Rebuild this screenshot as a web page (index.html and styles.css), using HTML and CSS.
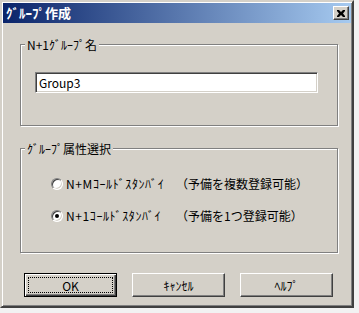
FILE: index.html
```html
<!DOCTYPE html>
<html lang="ja">
<head>
<meta charset="UTF-8" />
<title>ｸﾞﾙｰﾌﾟ作成</title>
<link rel="stylesheet" href="styles.css">
</head>
<body>

<div class="window">
    <div class="titlebar">
        <span class="title">ｸﾞﾙｰﾌﾟ作成</span>
        <button class="close-btn" aria-label="close">
            <svg viewBox="0 0 8 7" width="8" height="7">
                <path d="M0 0h2l2 2 2-2h2v1l-2 2.5 2 2.5v1h-2l-2-2-2 2h-2v-1l2-2.5-2-2.5z" />
            </svg>
        </button>
    </div>

    <div class="content">
        <div class="group group-name">
            <span class="group-title">N+1ｸﾞﾙｰﾌﾟ名</span>
            <div class="textbox">Group3</div>
        </div>

        <div class="group group-type">
            <span class="group-title">ｸﾞﾙｰﾌﾟ属性選択</span>
            <label class="radio-row">
                <span class="radio"></span>
                <span class="radio-label">N+Mｺｰﾙﾄﾞｽﾀﾝﾊﾞｲ</span>
                <span class="radio-note">（予備を複数登録可能）</span>
            </label>
            <label class="radio-row">
                <span class="radio checked"></span>
                <span class="radio-label">N+1ｺｰﾙﾄﾞｽﾀﾝﾊﾞｲ</span>
                <span class="radio-note">（予備を1つ登録可能）</span>
            </label>
        </div>

        <div class="buttons">
            <button class="btn default"><span class="focus">OK</span></button>
            <button class="btn">ｷｬﾝｾﾙ</button>
            <button class="btn">ﾍﾙﾌﾟ</button>
        </div>
    </div>
</div>

</body>
</html>
```

FILE: styles.css
```css
body {
    margin: 0;
    background: #f2f2f2;
    font-family: "Noto Sans CJK JP", "Liberation Sans", sans-serif;
    font-size: 12px;
    color: #000;
}

.window {
    width: 354px;
    height: 308px;
    box-sizing: border-box;
    background: #d4d0c8;
    border: 2px solid;
    border-color: #d4d0c8 #404040 #404040 #d4d0c8;
    box-shadow: inset 1px 1px 0 #fff, inset -1px -1px 0 #808080;
    padding: 1px;
}

.titlebar {
    height: 20px;
    display: flex;
    align-items: center;
    justify-content: space-between;
    padding: 0 2px 0 3px;
    background: linear-gradient(to right, #0a246a, #a6caf0);
}

.title {
    color: #fff;
    font-weight: bold;
    font-size: 13px;
    line-height: 14px;
}

.close-btn {
    width: 16px;
    height: 14px;
    padding: 0;
    margin: 0;
    display: flex;
    align-items: center;
    justify-content: center;
    background: #d4d0c8;
    border: 1px solid;
    border-color: #fff #404040 #404040 #fff;
    box-shadow: inset -1px -1px 0 #808080;
}

.close-btn svg {
    fill: #000;
}

.content {
    padding: 0 13px 0 17px;
}

.group {
    position: relative;
    border: 1px solid #808080;
    box-shadow: inset 1px 1px 0 #fff, 1px 1px 0 #fff;
}

.group-title {
    position: absolute;
    top: -8px;
    left: 4px;
    padding: 0 2px;
    line-height: 15px;
    background: #d4d0c8;
}

.group-name {
    margin-top: 21px;
    padding: 27px 0 32px 14px;
}

.textbox {
    width: 283px;
    height: 21px;
    box-sizing: border-box;
    background: #fff;
    border: 1px solid;
    border-color: #808080 #fff #fff #808080;
    box-shadow: inset 1px 1px 0 #404040, inset -1px -1px 0 #d4d0c8;
    padding: 2px 0 0 3px;
    line-height: 16px;
}

.group-type {
    margin-top: 22px;
    padding: 26px 0 29px 30px;
    display: flex;
    flex-direction: column;
    gap: 16px;
}

.radio-row {
    height: 16px;
    display: grid;
    grid-template-columns: 12px 107px auto;
    column-gap: 3px;
    align-items: center;
}

.radio {
    width: 12px;
    height: 12px;
    box-sizing: border-box;
    border-radius: 50%;
    background: #fff;
    border: 1px solid;
    border-color: #808080 #fff #fff #808080;
    box-shadow: inset 1px 1px 0 #404040, inset -1px -1px 0 #d4d0c8;
    display: flex;
    align-items: center;
    justify-content: center;
}

.radio.checked::after {
    content: "";
    width: 4px;
    height: 4px;
    border-radius: 50%;
    background: #000;
}

.radio-label {
    letter-spacing: 0.6px;
    white-space: nowrap;
}

.buttons {
    margin-top: 20px;
    padding-left: 4px;
    display: flex;
    gap: 15px;
}

.btn {
    width: 93px;
    height: 24px;
    padding: 0;
    font: inherit;
    color: #000;
    background: #d4d0c8;
    border: 1px solid;
    border-color: #fff #404040 #404040 #fff;
    box-shadow: inset -1px -1px 0 #808080;
    display: flex;
    align-items: center;
    justify-content: center;
}

.btn.default {
    border: 1px solid #000;
    box-shadow: inset 1px 1px 0 #fff, inset -1px -1px 0 #404040, inset -2px -2px 0 #808080;
    padding: 3px;
}

.focus {
    width: 100%;
    height: 100%;
    box-sizing: border-box;
    border: 1px dotted #000;
    display: flex;
    align-items: center;
    justify-content: center;
}
```
